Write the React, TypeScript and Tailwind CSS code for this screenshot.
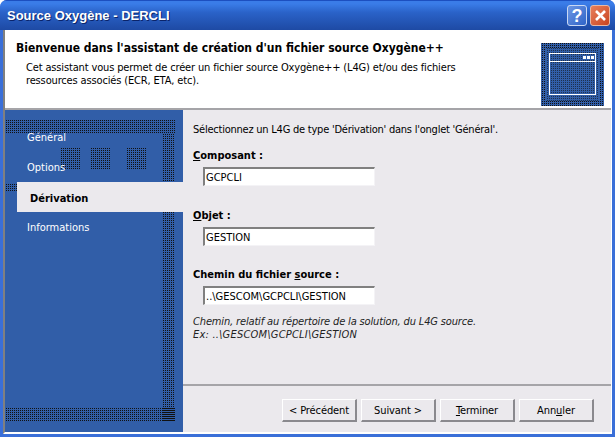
import { ReactNode } from "react";

const dots = "absolute bg-[conic-gradient(#111_25%,transparent_0)] bg-[length:2px_2px]";

const Field = ({ label, value, className }: { label: ReactNode; value: string; className: string }) => (
  <div className={className}>
    <div className="h-[13px] font-bold leading-[13px]">{label}</div>
    <div className="ml-[10px] h-[19px] w-[172px] border-t-2 border-l-2 border-r border-b border-t-[#808080] border-l-[#808080] border-r-[#f4f3f6] border-b-[#f4f3f6] bg-white pl-[1px] leading-[17px] mt-[5px]">
      {value}
    </div>
  </div>
);

const WizardButton = ({ children }: { children: ReactNode }) => (
  <button className="h-[23px] w-[75px] border-t border-l border-r-2 border-b-2 border-t-white border-l-white border-r-[#8a898e] border-b-[#8a898e] bg-[#ebe9ed] text-center text-[11px] leading-[19px] tracking-[-0.1px] text-black">
    {children}
  </button>
);

export default function App() {
  return (
    <div className="flex h-[437px] w-[615px] flex-col overflow-hidden rounded-t-[7px] bg-[#3a6fd8] font-['DejaVu_Sans_Condensed','DejaVu_Sans',sans-serif] text-[11px] text-black [font-stretch:condensed]">
      {/* title bar */}
      <div className="flex h-[30px] shrink-0 items-center justify-between border-t border-[#1c4fc0] bg-gradient-to-b from-[#3a7ce8] from-10% via-[#2a62c8] via-40% to-[#1e4aa4] pl-[7px] pr-[5px]">
        <span className="font-['Liberation_Sans',sans-serif] text-[13px] font-bold text-white [text-shadow:1px_1px_0_#0a246a]">Source Oxygène - DERCLI</span>
        <div className="flex gap-[3px]">
          <div className="flex h-[21px] w-[20px] items-center justify-center rounded-[3px] border border-[#c9d8f4] bg-gradient-to-br from-[#6d97e4] to-[#2f64c8] font-['Liberation_Sans',sans-serif] text-[18px] font-bold leading-none text-white">?</div>
          <div className="flex h-[21px] w-[20px] items-center justify-center rounded-[3px] border border-[#e8b8a4] bg-gradient-to-br from-[#e8805c] to-[#c9431c]">
            <svg width="13" height="13" viewBox="0 0 13 13"><path d="M2 2l9 9M11 2l-9 9" stroke="#fff" strokeWidth="2.6" /></svg>
          </div>
        </div>
      </div>
      {/* client */}
      <div className="ml-[3px] mr-[3px] mb-[3px] flex min-h-0 flex-1 flex-col border-l-2 border-r border-b-2 border-l-[#808080] border-r-white border-b-white bg-[#ebe9ed]">
        <div className="relative h-[80px] shrink-0 border-b-2 border-[#a5a4a8] bg-white pt-[11px] pl-[11px]">
          <div className="text-[12px] font-bold leading-[15px]">Bienvenue dans l'assistant de création d'un fichier source Oxygène++</div>
          <div className="mt-[5px] pl-[10px] leading-[13px] tracking-[-0.15px]">
            Cet assistant vous permet de créer un fichier source Oxygène++ (L4G) et/ou des fichiers<br />
            ressources associés (ECR, ETA, etc).
          </div>
          <div className="absolute left-[536px] top-[13px] h-[63px] w-[63px] bg-[#315ea8]">
            <div className={`${dots} inset-0`} />
            <div className="absolute inset-[5px] bg-[#315ea8]" />
            <div className={`${dots} inset-[5px] opacity-60`} />
            <div className="absolute left-[8px] top-[10px] h-[42px] w-[47px] border border-white">
              <div className="flex h-[8px] items-center justify-end gap-[1px] border-b border-white pr-[1px]">
                <span className="h-[3px] w-[3px] bg-white" />
                <span className="h-[3px] w-[3px] bg-white" />
                <span className="h-[3px] w-[3px] bg-white" />
              </div>
            </div>
          </div>
        </div>
        <div className="flex min-h-0 flex-1">
          {/* left panel */}
          <div className="relative w-[178px] shrink-0 bg-[#315ea8] text-white">
            <div className={`${dots} left-0 top-[10px] h-[14px] w-[170px]`} />
            <div className={`${dots} left-[157px] top-[24px] h-[288px] w-[13px]`} />
            <div className={`${dots} left-0 top-[298px] h-[14px] w-[170px]`} />
            <div className={`${dots} left-[55px] top-[38px] h-[21px] w-[21px]`} />
            <div className={`${dots} left-[85px] top-[38px] h-[21px] w-[21px]`} />
            <div className={`${dots} left-[121px] top-[38px] h-[21px] w-[21px]`} />
            <div className={`${dots} left-0 top-[74px] h-[7px] w-[12px]`} />
            <div className="relative pt-[21px]">
              <div className="h-[13px] pl-[22px] leading-[13px]">Général</div>
              <div className="mt-[17px] h-[13px] pl-[22px] leading-[13px]">Options</div>
              <div className="mt-[8px] ml-[12px] h-[30px] bg-[#ebe9ed] pl-[13px] pt-[2px] font-bold leading-[30px] text-black">Dérivation</div>
              <div className="mt-[9px] h-[13px] pl-[22px] leading-[13px]">Informations</div>
            </div>
          </div>
          {/* right panel */}
          <div className="flex min-w-0 flex-1 flex-col">
            <div className="h-[274px] shrink-0 pl-[10px] pt-[13px]">
              <div className="h-[13px] leading-[13px] tracking-[-0.23px]">Sélectionnez un L4G de type 'Dérivation' dans l'onglet 'Général'.</div>
              <Field className="mt-[13px]" label={<><u>C</u>omposant :</>} value="GCPCLI" />
              <Field className="mt-[23px]" label={<><u>O</u>bjet :</>} value="GESTION" />
              <Field className="mt-[22px]" label={<>Chemin du fichier <u>s</u>ource :</>} value="..\GESCOM\GCPCLI\GESTION" />
              <div className="mt-[10px] italic leading-[13px] tracking-[-0.15px] text-[#222]">
                Chemin, relatif au répertoire de la solution, du L4G source.<br />
                <span className="tracking-[0.2px]">Ex: ..\GESCOM\GCPCLI\GESTION</span>
              </div>
            </div>
            <div className="flex flex-1 items-start justify-end gap-[4px] border-t-2 border-[#a5a4a8] pr-[17px] pt-[13px]">
              <WizardButton>&lt; Précédent</WizardButton>
              <WizardButton>Suivant &gt;</WizardButton>
              <WizardButton><u>T</u>erminer</WizardButton>
              <WizardButton>Ann<u>u</u>ler</WizardButton>
            </div>
          </div>
        </div>
      </div>
    </div>
  );
}
